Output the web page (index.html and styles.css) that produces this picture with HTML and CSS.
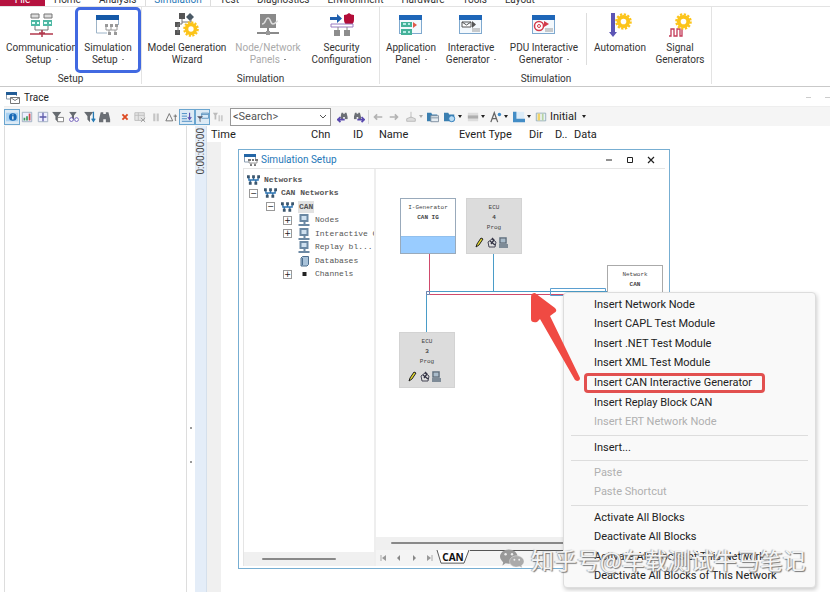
FILE: index.html
```html
<!DOCTYPE html>
<html lang="en">
<head>
<meta charset="utf-8">
<title>Simulation Setup</title>
<link rel="stylesheet" href="styles.css">
</head>
<body>
<svg class="defs" aria-hidden="true">
  <symbol id="gear" viewBox="0 0 18 18"><circle cx="9" cy="9" r="5" fill="none" stroke="#fcc419" stroke-width="4"/><circle cx="9" cy="9" r="7.6" fill="none" stroke="#fcc419" stroke-width="2.4" stroke-dasharray="2.4 1.58"/></symbol>
  <symbol id="win" viewBox="0 0 24 20"><rect x=".5" y=".5" width="22" height="18" fill="#f4f9fd" stroke="#7fa9cf"/><path d="M0 0h23v5H0z" fill="#1e66b8"/></symbol>
  <symbol id="net" viewBox="0 0 14 12"><path d="M2 3v3h10V3M7 3v3M3.500 6v3M9.500 6v3" fill="none" stroke="#2a71b0" stroke-width="1.400"/><path d="M0 1h3v3H0zM5.500 1h3v3h-3zM11 1h3v3h-3zM2 8h3v3H2zM8 8h3v3H8z" fill="#3b566e"/></symbol>
  <symbol id="pc" viewBox="0 0 12 12"><path d="M1 0h9v8H1zM5 8h2v2H5zM0 10h11v2H0z" fill="#6b88a3"/><path d="M3 2h5v4H3z" fill="#cfe0ef"/></symbol>
  <symbol id="simwin" viewBox="0 0 14 12"><path d="M.5 1v7H5M11.500 1v4" fill="none" stroke="#8a9db0"/><path d="M0 0h12v3H0z" fill="#2466a6"/><path d="M4 5h3v2H4zM8 5h2v2H8zM11 5h3v2h-3zM6 10h2v2H6zM10 10h2v2h-2z" fill="#777"/><path d="M5 7v2h8V7M7 9v2M11 9v2" fill="none" stroke="#999"/></symbol>
  <symbol id="funnel" viewBox="0 0 14 12"><path d="M0 0h11L7 5v7L4 9V5z" fill="#666b70"/></symbol>
  <symbol id="binoc" viewBox="0 0 14 13"><path d="M2 1h3v2h3V1h3l2 8v4H8V9H5v4H0V9z" fill="#6b6f75"/></symbol>
  <symbol id="folder" viewBox="0 0 13 12"><path d="M0 1h5l1 2h6v8H0z" fill="#3b7fb0"/></symbol>
  <symbol id="blockicons" viewBox="0 0 34 11"><path d="m2 10 1-3 4-6 2 1-4 6z" fill="#e6dc2e" stroke="#222"/><path d="m14 5 4-3 4 3-1 5h-6z" fill="#ddd" stroke="#445"/><path d="m16 4 5 4M18 1l2 2-3 4" fill="none" stroke="#334" stroke-width="1.300"/><path d="M26 1h6v5h-6zM25 8h9M25 10h9" fill="none" stroke="#5f7080" stroke-width="1.500"/><path d="M27 2h4v3h-4z" fill="#a9bccb"/></symbol>
</svg>

<nav class="tabs">
  <a class="tab file" href="#">File</a><a class="tab" href="#">Home</a><a class="tab" href="#">Analysis</a><a class="tab active" href="#">Simulation</a><a class="tab" href="#">Test</a><a class="tab" href="#">Diagnostics</a><a class="tab" href="#">Environment</a><a class="tab" href="#">Hardware</a><a class="tab" href="#">Tools</a><a class="tab" href="#">Layout</a>
</nav>

<header class="ribbon">
  <section class="group g-setup">
    <div class="cmds">
      <button class="cmd"><svg viewBox="0 0 24 24"><path d="M1 1h8v4H1zM14 1h8v4h-8z" fill="#ddd" stroke="#777"/><path d="M1 7h9v6H1zM13 7h9v6h-9z" fill="#4fb8a4"/><path d="M2 10h3m2 0h2M14 10h3m2 0h2" stroke="#e8fffa" stroke-width="2"/><path d="M5 13v4h13v-4M12 17v2" fill="none" stroke="#777"/><path d="M0 21h23M12 17v7M9 20h6" stroke="#b23a4e" stroke-width="1.500" fill="none"/></svg><span>Communication<br>Setup <i class="dot"></i></span></button>
      <button class="cmd marked"><svg viewBox="0 0 24 24"><path d="M.5 3v17H11M22.500 3v9" fill="none" stroke="#9db4c8"/><path d="M0 2h23v5H0z" fill="#1559a8"/><path d="M9 11h3v3H9zM14 11h3v3h-3zM19 11h3v3h-3zM12 19h3v3h-3zM18 19h3v3h-3z" fill="#999"/><path d="M10 14v3h11v-3M15 14v3M13 17v3M19 17v3" fill="none" stroke="#999"/></svg><span>Simulation<br>Setup <i class="dot"></i></span></button>
    </div>
    <h2>Setup</h2>
  </section>
  <section class="group g-sim">
    <div class="cmds">
      <button class="cmd"><svg viewBox="0 0 24 24"><path d="M4 0h6v6H4zM0 9h5v5H0zM0 17h5v5H0z" fill="#555"/><path d="m15 0 4 4-4 4-4-4z" fill="#4a5a66"/><path d="M7 6v5H3v9M7 9h9V6" fill="none" stroke="#777"/><use href="#gear" x="8" y="8" width="16" height="16"/></svg><span>Model Generation<br>Wizard</span></button>
      <button class="cmd" disabled><svg viewBox="0 0 24 24"><path d="M4 1h16v14H4z" fill="#8a8a8a"/><path d="M12 15v5M1 20h22" stroke="#8a8a8a" stroke-width="2"/><path d="M6 11c4 0 3-6 6-6s2 6 5 6 3-3 5-3" fill="none" stroke="#ddd" stroke-width="1.500"/><path d="M10 18h4v4h-4z" fill="#999"/></svg><span>Node/Network<br>Panels <i class="dot"></i></span></button>
      <button class="cmd"><svg viewBox="0 0 24 24"><path d="M0 4h7V1l5 4.500L7 10V7H0z" fill="#1f5fae"/><path d="M14 2q3 0 5-2 2 2 5 2v5q0 4-5 7-5-3-5-7z" fill="#b30d38"/><path d="M1 11h22v3H1z" fill="#fff" stroke="#9a7bc0"/><path d="M8 14v3M17 14v3" stroke="#888"/><path d="M4 17h6v6H4zM14 17h6v6h-6z" fill="#8d8d8d"/></svg><span>Security<br>Configuration</span></button>
    </div>
    <h2>Simulation</h2>
  </section>
  <section class="group g-stim">
    <div class="cmds">
      <button class="cmd"><svg viewBox="0 0 24 24"><use href="#win" y="2" width="24" height="20"/><path d="M2 9h11v5H2zM2 16h11v6H2z" fill="#45b299"/><path d="M4 11h3m2 0h2M4 19h3m2 0h2" stroke="#dff" stroke-width="1.500"/><path d="m14 9 4 3-4 3z" fill="#e05a4a"/></svg><span>Application<br>Panel <i class="dot"></i></span></button>
      <button class="cmd"><svg viewBox="0 0 24 24"><use href="#win" y="2" width="24" height="20"/><path d="M3 9h9v5H3zl4.500 3L12 9" fill="#fff" stroke="#555"/><path d="m13 8 4 3.500L13 15z" fill="#555"/><path d="M13 16h8M13 18h8" stroke="#999"/></svg><span>Interactive<br>Generator <i class="dot"></i></span></button>
      <button class="cmd"><svg viewBox="0 0 24 24"><use href="#win" y="2" width="24" height="20"/><circle cx="7" cy="13" r="4.500" fill="#fff" stroke="#d33a4a" stroke-width="1.500"/><circle cx="7" cy="13" r="1.500" fill="none" stroke="#d33a4a"/><path d="m12 8 5 3-5 3z" fill="#d33a4a"/><path d="M13 16h8M13 18h8" stroke="#999"/></svg><span>PDU Interactive<br>Generator <i class="dot"></i></span></button>
      <span class="rule"></span>
      <button class="cmd"><svg viewBox="0 0 24 24"><path d="M3 0h4v19h2l-4 5-4-5h2z" fill="#5c55b5"/><use href="#gear" x="7" y="0" width="17" height="17"/></svg><span>Automation</span></button>
      <button class="cmd"><svg viewBox="0 0 24 24"><path d="M1 23h2v-7h3v7h3v-7h3v7h2v-7" fill="none" stroke="#c43b58" stroke-width="1.300"/><use href="#gear" x="7" y="0" width="17" height="17"/></svg><span>Signal<br>Generators</span></button>
    </div>
    <h2>Stimulation</h2>
  </section>
</header>

<main class="trace">
  <h1 class="title"><svg class="i14" viewBox="0 0 14 12"><path d="M.5 0v7H4M10.500 0v4" fill="none" stroke="#8899aa"/><path d="M0 0h11v3H0z" fill="#225c96"/><path d="M4.500 5.500h9v6h-9zl4.500 3 4.500-3" fill="#fff" stroke="#777"/></svg>Trace<span class="titlemarks"><i></i><i></i></span></h1>
  <div class="toolbar">
    <div class="tools seven">
      <button class="tool on" aria-label="Details"><svg viewBox="0 0 14 12"><path d="M0 1h14v10H0z" fill="#a9d2f2"/><circle cx="8" cy="6" r="4.500" fill="#1768b5"/><path d="M8 5v4M8 3v1" stroke="#fff" stroke-width="1.500"/></svg></button>
      <button class="tool" aria-label="Statistics"><svg viewBox="0 0 14 12"><path d="M1.500.5h11v11h-11z" fill="#eef" stroke="#9ab"/><path d="M4 10V7M7 10V5" stroke="#3c9a5a" stroke-width="2"/><path d="M10 10V2" stroke="#d24545" stroke-width="2"/></svg></button>
      <button class="tool" aria-label="Difference"><svg viewBox="0 0 14 12"><path d="M1.500.5h11v11h-11z" fill="#eef" stroke="#9ab"/><path d="M3 6h8M7 1v4M7 7v4" stroke="#5a58a8" stroke-width="1.500"/></svg></button>
      <button class="tool" aria-label="Message filter"><svg viewBox="0 0 14 12"><use href="#funnel" width="14" height="12"/><path d="M6.500 6.500h7v5h-7z" fill="#fff" stroke="#777"/></svg></button>
      <button class="tool" aria-label="View filter"><svg viewBox="0 0 14 12"><use href="#funnel" width="14" height="10"/><circle cx="4" cy="9" r="2.200" fill="#fff" stroke="#6652b5"/><circle cx="10" cy="9" r="2.200" fill="#fff" stroke="#6652b5"/></svg></button>
      <button class="tool" aria-label="Sort filter"><svg viewBox="0 0 14 12"><use href="#funnel" width="14" height="12"/><path d="M11 0v11M9 8l2 3 2-3" fill="none" stroke="#267bb5" stroke-width="1.500"/></svg></button>
      <button class="tool" aria-label="Find"><svg viewBox="0 0 14 13"><use href="#binoc" width="14" height="13"/></svg></button>
    </div>
    <div class="tools seven">
      <button class="tool" aria-label="Clear"><svg viewBox="0 0 14 12"><path d="m4 3 6 6m0-6L4 9" stroke="#dd4a22" stroke-width="2.200"/></svg></button>
      <button class="tool" aria-label="Clear view"><svg viewBox="0 0 14 12"><path d="M1 1h11v9H1zM1 4h11M5 1v9" fill="#e5e5e5" stroke="#bbb"/><path d="m8 7 5 5m0-5-5 5" stroke="#999"/></svg></button>
      <button class="tool" aria-label="Pause"><svg viewBox="0 0 14 12"><path d="M5 2v9M9 2v9" stroke="#c5c5c5" stroke-width="2.500"/></svg></button>
      <button class="tool" aria-label="Delta time"><svg viewBox="0 0 14 12"><path d="M1 10.500 5 2l4 8.500zM12 3v7h1M10 5h4" fill="none" stroke="#666"/></svg></button>
      <button class="tool on" aria-label="Scroll"><svg viewBox="0 0 14 12"><path d="M1 2h6M1 5h6M1 8h6M1 11h12" stroke="#3b82bf"/><path d="M10 1v8M8 6l2 3 2-3" fill="none" stroke="#5a50b0" stroke-width="1.300"/></svg></button>
      <button class="tool on" aria-label="Filter window"><svg viewBox="0 0 14 12"><path d="M5.500 1.500h8v6h-8zM5 3h8" fill="#d8eaf8" stroke="#568fbb"/><path d="M0 5h7l-3 3v4l-1-1V8z" fill="#556"/></svg></button>
      <button class="tool" aria-label="Filter columns"><svg viewBox="0 0 14 12"><path d="M1 1h6L5 4v5H3V4z" fill="#bbb"/><path d="M8.500 4v7M11.500 4v7" stroke="#ccc" stroke-width="2"/></svg></button>
    </div>
    <label class="search"><select aria-label="Search"><option>&lt;Search&gt;</option></select><svg viewBox="0 0 8 6"><path d="m1 1 3 3 3-3" fill="none" stroke="#555"/></svg></label>
    <div class="tools">
      <button class="tool" aria-label="Find previous"><svg viewBox="0 0 14 12"><use href="#binoc" x="4" width="9" height="9"/><path d="M0 9h9M4 6 1 9l3 3" fill="none" stroke="#5949ae" stroke-width="2"/></svg></button>
      <button class="tool" aria-label="Find next"><svg viewBox="0 0 14 12"><use href="#binoc" x="1" width="9" height="9"/><path d="M5 9h8m-3-3 3 3-3 3" fill="none" stroke="#5949ae" stroke-width="2"/></svg></button>
      <span class="split"></span>
      <button class="tool" aria-label="Back"><svg viewBox="0 0 14 12"><path d="M3 6h9M6 3 3 6l3 3" fill="none" stroke="#b3b3b3" stroke-width="2"/></svg></button>
      <button class="tool" aria-label="Forward"><svg viewBox="0 0 14 12"><path d="M2 6h9M8 3l3 3-3 3" fill="none" stroke="#b3b3b3" stroke-width="2"/></svg></button>
      <button class="tool drop" aria-label="Marker"><svg viewBox="0 0 14 12"><path d="M7 0v7M2 8l5-2 5 2v3H2z" fill="#ddd" stroke="#b5b5b5"/></svg><i class="caret dim"></i></button>
      <button class="tool" aria-label="Open"><svg viewBox="0 0 14 12"><use href="#folder" width="13" height="12"/><path d="M4.500 4.500h9v7h-9zM5 7h8" fill="#e6edf2" stroke="#789"/></svg></button>
      <button class="tool drop" aria-label="Export"><svg viewBox="0 0 14 12"><use href="#folder" width="13" height="12"/><circle cx="9" cy="8" r="3.500" fill="#b9dcf4" stroke="#2475b5"/></svg><i class="caret"></i></button>
      <button class="tool drop" aria-label="Rows"><svg viewBox="0 0 14 12"><path d="M1 1h12v10H1z" fill="#ddd"/><path d="M1 5h12M1 7h12" stroke="#888"/></svg><i class="caret"></i></button>
      <button class="tool drop" aria-label="Font size"><svg viewBox="0 0 14 12"><path d="m1 12 4-11 4 11M3 8h5" fill="none" stroke="#666" stroke-width="1.500"/><circle cx="11" cy="3" r="2" fill="#3e8bc9"/></svg><i class="caret"></i></button>
      <button class="tool drop" aria-label="Layout"><svg viewBox="0 0 14 12"><path d="M4 0h9v8H4z" fill="#dcecf8"/><path d="M0 0h4v8h10v4H0z" fill="#438dc6"/></svg><i class="caret"></i></button>
      <button class="tool drop named"><svg viewBox="0 0 14 12"><path d="M1.500 1.500h11v9h-11z" fill="#e9f2f8" stroke="#8fa9b5"/><path d="M3 2h3v8H3z" fill="#f0d36a"/><path d="M8 2h2v8H8z" fill="#b8d5a0"/></svg>Initial<i class="caret wide"></i></button>
    </div>
  </div>
  <div class="work">
    <aside class="left"></aside>
    <div class="splitter"><i></i></div>
    <div class="ruler"><span>0:00:00:00</span></div>
    <div class="log">
      <table>
        <colgroup><col class="c-time"><col class="c-chn"><col class="c-id"><col class="c-name"><col class="c-event"><col class="c-dir"><col class="c-dlc"><col></colgroup>
        <thead><tr><th>Time</th><th>Chn</th><th>ID</th><th>Name</th><th>Event Type</th><th>Dir</th><th>D..</th><th>Data</th></tr></thead>
      </table>
      <div class="gutter"></div>
    </div>
  </div>
</main>

<section class="window">
  <div class="wtitle"><svg class="i14" viewBox="0 0 14 12"><use href="#simwin" width="14" height="12"/></svg><h2>Simulation Setup</h2>
    <button aria-label="Minimize"><svg viewBox="0 0 8 8"><path d="M1 4h6" stroke="#222"/></svg></button><button aria-label="Maximize"><svg viewBox="0 0 8 8"><path d="M1.500 1.500h5v5h-5z" fill="none" stroke="#222"/></svg></button><button aria-label="Close"><svg viewBox="0 0 8 8"><path d="m1 1 6 6m0-6L1 7" stroke="#222" stroke-width="1.200"/></svg></button>
  </div>
  <div class="wbody">
    <div class="treepane">
      <ul class="tree">
        <li class="l0"><svg><use href="#net"/></svg><b>Networks</b></li>
        <li class="l1"><button aria-label="Collapse">−</button><svg><use href="#net"/></svg><b>CAN Networks</b></li>
        <li class="l2"><button aria-label="Collapse">−</button><svg><use href="#net"/></svg><b class="sel">CAN</b></li>
        <li class="l3"><button aria-label="Expand">+</button><svg><use href="#pc"/></svg><span>Nodes</span></li>
        <li class="l3"><button aria-label="Expand">+</button><svg><use href="#pc"/></svg><span>Interactive G</span></li>
        <li class="l3 leaf"><svg><use href="#pc"/></svg><span>Replay bl...</span></li>
        <li class="l3 leaf"><svg viewBox="0 0 12 12"><path d="M2.500 3 4 1.500h6v8L8.500 11h-6z" fill="#a9c3da" stroke="#4d6e8e"/><path d="M4 3v7" stroke="#4d6e8e"/></svg><span>Databases</span></li>
        <li class="l3"><button aria-label="Expand">+</button><svg viewBox="0 0 12 12"><path d="M4 4h4v4H4z" fill="#222"/></svg><span>Channels</span></li>
      </ul>
      <div class="hbar"><i></i></div>
    </div>
    <div class="canvaspane">
      <div class="canvas">
        <svg class="wires"><path d="M53.500 85v40.500H240" fill="none" stroke="#d04a6c"/><path d="M50.500 163v-40.500H231M117.500 85v37" fill="none" stroke="#4a9cc8"/><path d="M174.500 119.500h55v7h-55z" fill="none" stroke="#5b9fd0"/><path d="M50.500 122.500h3v3h-3z" fill="#fff" stroke="#6d83b0"/></svg>
        <div class="node gen"><span>I-Generator</span><b>CAN IG</b></div>
        <div class="node ecu a"><span>ECU</span><b>4</b><span>Prog</span><svg viewBox="0 0 34 11"><use href="#blockicons"/></svg></div>
        <div class="node ecu b"><span>ECU</span><b>3</b><span>Prog</span><svg viewBox="0 0 34 11"><use href="#blockicons"/></svg></div>
        <div class="node bus"><span>Network</span><b>CAN</b></div>
      </div>
      <div class="cbar"><i></i></div>
      <div class="sheets">
        <button aria-label="First"><svg viewBox="0 0 8 8"><path d="M1 1v6" stroke="#aaa"/><path d="M6 1v6L2 4z" fill="#999"/></svg></button><button aria-label="Previous"><svg viewBox="0 0 8 8"><path d="M5 1v6L2 4z" fill="#888"/></svg></button><button aria-label="Next"><svg viewBox="0 0 8 8"><path d="M3 1v6l3-3z" fill="#888"/></svg></button><button aria-label="Last"><svg viewBox="0 0 8 8"><path d="M2 1v6l4-3z" fill="#999"/><path d="M7 1v6" stroke="#aaa"/></svg></button>
        <a class="sheet" href="#"><svg viewBox="0 0 34 16" preserveAspectRatio="none"><path d="M1 0 5 14H28L33 0" fill="#fff" stroke="#555"/></svg><b>CAN</b></a><span class="rest"></span>
      </div>
    </div>
  </div>
</section>

<div class="menu" role="menu">
  <div class="mg m7"><button>Insert Network Node</button><button>Insert CAPL Test Module</button><button>Insert .NET Test Module</button><button>Insert XML Test Module</button><button class="hot">Insert CAN Interactive Generator</button><button>Insert Replay Block CAN</button><button disabled>Insert ERT Network Node</button></div>
  <hr>
  <div class="mg m1"><button>Insert...</button></div>
  <hr>
  <div class="mg m2"><button disabled>Paste</button><button disabled>Paste Shortcut</button></div>
  <hr>
  <div class="mg m4"><button>Activate All Blocks</button><button>Deactivate All Blocks</button><button>Activate All Blocks of This Network</button><button>Deactivate All Blocks of This Network</button></div>
</div>

<svg class="arrow" viewBox="0 0 60 100" aria-hidden="true"><path d="M0 5q0-4 4-4l20 15q3 3-1 5l-4 3 30 62q0 3-3 3l-2-1L9 27l-3 3q-6 1-6-3z" fill="#f04a43"/></svg>

<div class="mark"><svg viewBox="0 0 30 24" aria-hidden="true"><path d="M11 0c6 0 11 4 11 9s-5 9-11 9l-4-.6L3 20l1-4C2 14 0 12 0 9c0-5 5-9 11-9z" fill="#999"/><circle cx="7" cy="6" r="1.500" fill="#eee"/><circle cx="15" cy="6" r="1.500" fill="#eee"/><path d="M21 8c5 0 9 3.400 9 7 0 2-1.500 4-3 5l.6 3-3-1.600L21 22c-5 0-9-3-9-7s4-7 9-7z" fill="#aaa" stroke="#eee" stroke-width=".6"/><circle cx="18" cy="13" r="1.200" fill="#eee"/><circle cx="24" cy="13" r="1.200" fill="#eee"/></svg><span>知乎号@车载测试牛马笔记</span></div>
</body>
</html>
```
FILE: styles.css
```css
* { box-sizing: border-box; }
html, body { height: 100%; }
body {
  margin: 0;
  display: flex;
  flex-direction: column;
  position: relative;
  overflow: hidden;
  background: #fff;
  color: #333;
  font: 11px/14px Roboto, "Noto Sans CJK SC", sans-serif;
}
button { font: inherit; color: inherit; background: none; border: 0; padding: 0; margin: 0; }
h1, h2 { margin: 0; font-weight: 400; font-size: inherit; }
a { color: inherit; text-decoration: none; }
svg { display: block; flex: none; }
.defs { position: absolute; width: 0; height: 0; }
.i14 { width: 14px; height: 12px; }

/* ribbon */
.tabs, .ribbon { font-size: 10px; }
.tabs { display: flex; align-items: flex-end; height: 7px; overflow: hidden; border-bottom: 1px solid #e3e3e3; flex: none; }
.tab { padding: 0 9px; line-height: 12px; height: 12px; flex: none; }
.tab.file { background: #b5123f; color: #fff; width: 45px; text-align: center; }
.tab.active { color: #2a7ab8; border: solid #ddd; border-width: 0 1px; padding: 0 8px; }
.ribbon { display: flex; height: 80px; border-bottom: 1px solid #c9c9c9; flex: none; }
.group { display: flex; flex-direction: column; border-right: 1px solid #e3e3e3; margin-bottom: 2px; }
.group h2 { text-align: center; line-height: 12px; }
.cmds { display: grid; height: 66px; flex: none; }
.g-setup { padding-left: 8px; }
.g-setup h2 { padding-right: 8px; }
.g-setup .cmds { grid-template-columns: 67px 66px; }
.g-sim { padding: 0 3px; }
.g-sim .cmds { grid-template-columns: 84px 78px 69px; }
.g-stim { padding: 0 3px 0 4px; }
.g-stim .cmds { grid-template-columns: 54px 66px 80px 4px 64px 56px; }
.cmd { display: flex; flex-direction: column; align-items: center; padding-top: 6px; line-height: 12px; white-space: nowrap; }
.cmd svg { width: 24px; height: 24px; margin-bottom: 5px; }
.cmd:disabled { color: #aaa; }
.cmd.marked { border: 3px solid #4169e1; border-radius: 5px; padding-top: 3px; }
.dot { display: inline-block; width: 2px; height: 1px; background: #888; vertical-align: 3px; margin-left: 2px; }
.rule { width: 1px; margin: 6px 0 8px 2px; background: #ddd; }

/* trace panel */
.trace { flex: 1; display: flex; flex-direction: column; padding-left: 4px; min-height: 0; color: #222; }
.title { display: flex; align-items: center; gap: 4px; height: 20px; padding: 2px 0 0 2px; border-bottom: 1px solid #eee; flex: none; font-size: 10px; }
.titlemarks { margin-left: auto; display: flex; gap: 14px; }
.titlemarks i { width: 5px; height: 1px; background: #ccc; }
.toolbar { display: flex; align-items: center; gap: 4px; height: 19px; background: #f5f5f5; flex: none; }
.tools { display: flex; align-items: center; }
.seven { display: grid; grid-template-columns: repeat(7, 1fr); width: 109px; }
.tool { display: flex; align-items: center; justify-content: center; width: 16px; height: 16px; }
.seven .tool { width: auto; }
.tool svg { width: 12px; height: 12px; }
.tool.on { border: 1px solid #6aa5cf; background: #dceaf5; }
.tool.drop { width: 23px; gap: 2px; }
.tool.named { width: auto; gap: 3px; margin-left: 2px; }
.caret { border: solid transparent; border-width: 3px 2px 0; border-top-color: #222; }
.caret.dim { border-top-color: #aaa; }
.caret.wide { margin-left: 2px; }
.split { width: 1px; height: 14px; background: #d5d5d5; margin: 0 1px; }
.search { display: flex; align-items: center; width: 101px; height: 18px; border: 1px solid #999; background: #fff; padding: 0 3px 0 2px; }
.search select { flex: 1; min-width: 0; appearance: none; border: 0; background: none; font: inherit; color: #555; padding: 0; outline: 0; }
.search svg { width: 8px; height: 6px; }
.work { flex: 1; display: flex; min-height: 0; }
.left { width: 183px; border: solid #ddd; border-width: 0 1px; }
.splitter { width: 8px; display: flex; align-items: center; justify-content: center; }
.splitter i { width: 2px; height: 36px; margin-top: 172px; border: dotted #999; border-width: 2px 0; }
.ruler { width: 12px; background: #e4edf8; border-right: 1px solid #d5e0ec; padding-top: 2px; }
.ruler span { display: block; writing-mode: vertical-rl; transform: rotate(180deg); font-size: 10px; line-height: 11px; color: #444; }
.log { flex: 1; display: flex; flex-direction: column; min-width: 0; }
.log table { width: 100%; table-layout: fixed; border-collapse: collapse; }
.log th { font-weight: 400; text-align: left; padding: 2px 0 0 4px; line-height: 14px; white-space: nowrap; }
.c-time { width: 100px; } .c-chn { width: 42px; } .c-id { width: 26px; } .c-name { width: 80px; }
.c-event { width: 70px; } .c-dir { width: 26px; } .c-dlc { width: 19px; }
.gutter { width: 14px; flex: 1; background: #f0f0f0; }

/* floating simulation window */
.window { position: absolute; left: 238px; top: 149px; width: 432px; height: 420px; display: flex; flex-direction: column; background: #fff; border: 1px solid #77aed2; padding: 0 4px 2px; }
.wtitle { display: flex; align-items: center; height: 19px; padding: 1px 4px 0 1px; flex: none; border-bottom: 1px solid #e5e5e5; }
.wtitle h2 { flex: 1; padding-left: 3px; color: #1e78b8; font-size: 10px; }
.wtitle button { width: 21px; display: grid; place-items: center; }
.wtitle button svg { width: 8px; height: 8px; }
.wbody { flex: 1; display: flex; min-height: 0; }
.treepane { width: 133px; display: flex; flex-direction: column; border-left: 1px solid #e5e5e5; border-right: 2px solid #eee; font: 8px/12px "Liberation Mono", monospace; color: #555; }
.tree { flex: none; list-style: none; margin: 4px 0 auto; padding: 0; height: 108px; display: grid; grid-auto-rows: 1fr; overflow: hidden; }
.tree li { display: flex; align-items: center; white-space: nowrap; }
.tree svg { width: 13px; height: 12px; margin-right: 4px; }
.tree button { width: 9px; height: 9px; border: 1px solid #999; font: 8px/7px "DejaVu Sans", sans-serif; margin-right: 6px; text-align: center; background: #fff; color: #222; }
.l0 { padding-left: 3px; } .l1 { padding-left: 5px; } .l2 { padding-left: 22px; } .l3 { padding-left: 39px; } .l3.leaf { padding-left: 54px; }
.sel { background: #e2e2e2; padding: 0 1px; }
.hbar { height: 14px; background: #f0f0f0; padding: 6px 38px 0 18px; }
.hbar i, .cbar i { display: block; height: 2px; background: #888; border-radius: 1px; }
.canvaspane { flex: 1; display: flex; flex-direction: column; min-width: 0; }
.canvas { flex: 1; position: relative; overflow: hidden; }
.wires { position: absolute; inset: 0; width: 100%; height: 100%; }
.node { position: absolute; width: 56px; height: 56px; display: flex; flex-direction: column; align-items: center; gap: 2px; padding-top: 5px; border: 1px solid #aaa; background: #fff; font: 6px/8px "Liberation Mono", monospace; color: #444; }
.gen { left: 24px; top: 29px; background: linear-gradient(#fff 37px, #8ab4dc 37px, #99ccff 38px); border-color: #9ab; }
.ecu { background: #dcdcdc; border-color: #d3d3d3; }
.ecu svg { width: 34px; height: 11px; margin: 3px 6px 0 0; }
.ecu.a { left: 90px; top: 29px; }
.ecu.b { left: 23px; top: 163px; }
.bus { left: 231px; top: 96px; }
.cbar { height: 13px; background: #f0f0f0; padding: 5px 0 0 15px; }
.sheets { display: flex; height: 16px; background: #f4f4f4; }
.sheets button { width: 15px; display: grid; place-items: center; }
.sheets button svg { width: 8px; height: 8px; }
.sheet { display: grid; width: 34px; height: 15px; }
.sheet svg, .sheet b { grid-area: 1 / 1; width: 34px; height: 15px; }
.sheet b { position: relative; text-align: center; font: bold 10px/15px "Noto Sans", sans-serif; color: #111; }
.rest { flex: 1; border-top: 1px solid #555; }

/* context menu */
.menu { position: absolute; left: 563px; top: 292px; width: 253px; background: #f9f9f9; border: 1px solid #ddd; border-radius: 4px; padding: 2px 7px 1px; box-shadow: 1px 2px 4px rgba(0,0,0,.2); color: #222; }
.mg { display: grid; grid-auto-rows: 1fr; padding: 0 43px 0 13px; }
.m7 { height: 137px; } .m1 { height: 19px; } .m2 { height: 39px; } .m4 { height: 78px; }
.mg button { text-align: left; padding: 0 9px 0 10px; line-height: 14px; white-space: nowrap; }
.mg button:disabled { color: #b0b0b0; }
.mg .hot { border-radius: 4px; box-shadow: inset 0 0 0 3px #e2504f; }
.menu hr { border: 0; height: 1px; background: #ddd; margin: 3px 0 2px; }

.arrow { position: absolute; left: 531px; top: 292px; width: 60px; height: 100px; }
.mark { position: absolute; left: 500px; top: 544px; display: flex; align-items: center; gap: 7px; white-space: nowrap; font: 23px/30px "Noto Sans CJK SC", sans-serif; color: #f4f4f4; text-shadow: 1px 1px 1px #777, -1px 0 1px #aaa; }
.mark svg { width: 24px; height: 24px; }
```
